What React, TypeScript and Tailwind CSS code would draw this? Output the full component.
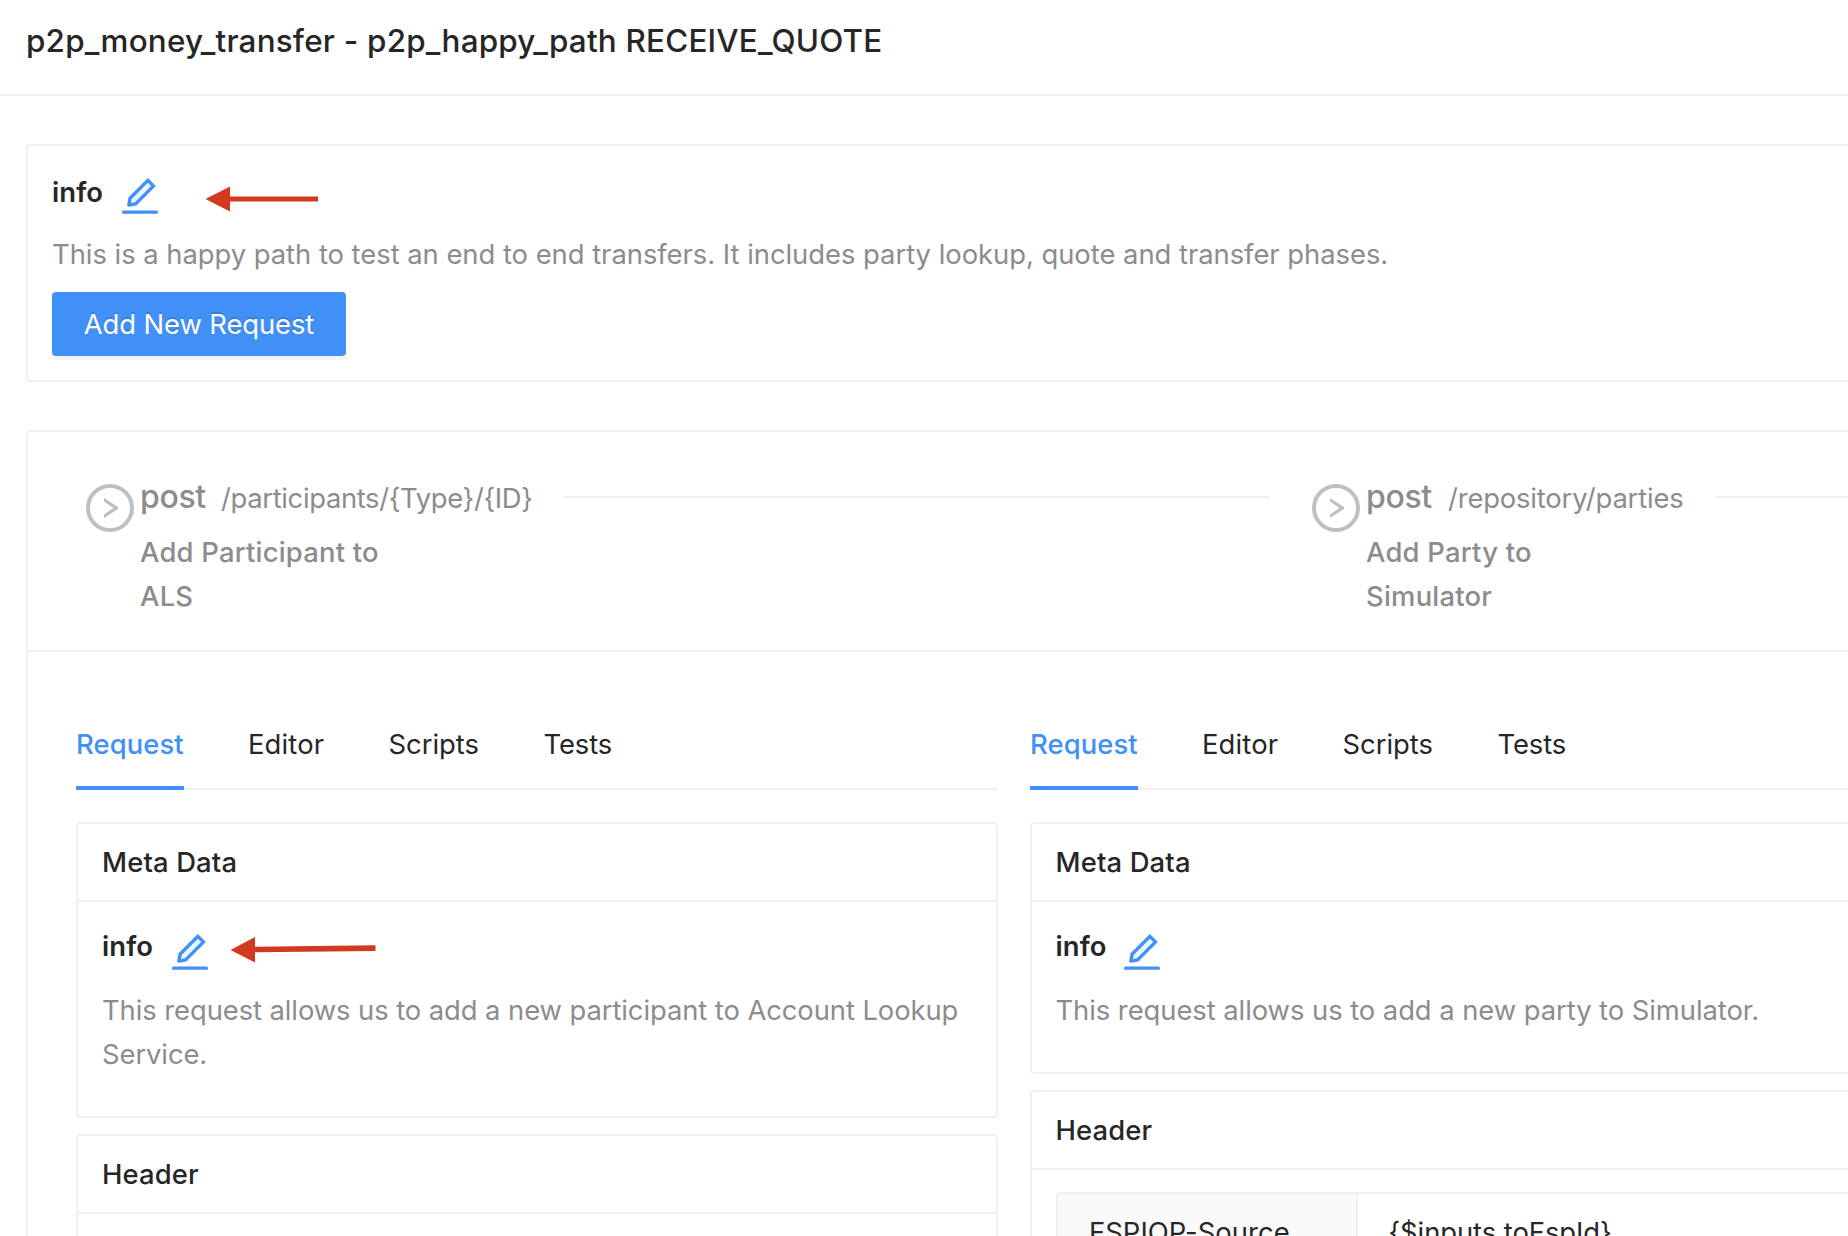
import type { ReactNode } from 'react';

function EditIcon({ className = '' }: { className?: string }) {
  return (
    <svg viewBox="64 64 896 896" className={`h-10 w-10 shrink-0 ${className}`}>
      <path fill="#e6f7ff" d="M761.1 288.3L687.8 215 325.1 577.6l-15.6 89 88.9-15.7z" />
      <path
        fill="#4090f7"
        d="M880 836H144c-17.7 0-32 14.3-32 32v36c0 4.4 3.6 8 8 8h784c4.4 0 8-3.6 8-8v-36c0-17.7-14.3-32-32-32zm-622.3-84c2 0 4-.2 6-.5L431.9 722c2-.4 3.9-1.3 5.3-2.8l423.9-423.9a9.96 9.96 0 0 0 0-14.1L694.9 114.9c-1.9-1.9-4.4-2.9-7.1-2.9s-5.2 1-7.1 2.9L256.8 538.8c-1.5 1.5-2.4 3.3-2.8 5.3l-29.5 168.2a33.5 33.5 0 0 0 9.4 29.8c6.6 6.4 14.9 9.9 23.8 9.9zm67.4-174.4L687.8 215l73.3 73.3-362.7 362.6-88.9 15.7 15.6-89z"
      />
    </svg>
  );
}

function InfoRow({ iconClass, labelClass = 'w-[68px]', children }: { iconClass: string; labelClass?: string; children?: ReactNode }) {
  return (
    <div className="relative flex h-11 items-start">
      <span className={`shrink-0 font-semibold tracking-[0.1px] text-[#262626] ${labelClass}`}>info</span>
      <EditIcon className={iconClass} />
      {children}
    </div>
  );
}

function Step({ path, desc, groupClass, pathClass, descClass }: { path: string; desc: string; groupClass: string; pathClass: string; descClass: string }) {
  return (
    <div className="flex w-[1184px] shrink-0 items-start text-[#8c8c8c]">
      <svg viewBox="0 0 48 48" className="mt-3 h-12 w-12 shrink-0">
        <circle cx="24" cy="24" r="22" strokeWidth="4" fill="none" stroke="#bfbfbf" />
        <path d="M18 14L32 23.1V24.9L18 34V30.4L27.4 24L18 17.6Z" fill="#bfbfbf" />
      </svg>
      <div className={`ml-1.5 shrink-0 ${groupClass}`}>
        <div className="flex h-[49px] items-baseline whitespace-nowrap leading-[49px]">
          <span className="w-[81px] text-[32px] font-medium tracking-[-0.35px]">post</span>
          <span className={pathClass}>{path}</span>
        </div>
        <div className={`mt-[9px] w-[280px] font-medium ${descClass}`}>{desc}</div>
      </div>
      <div className="mt-6 h-0.5 flex-1 bg-[#f0f0f0]" />
    </div>
  );
}

function Tabs() {
  return (
    <div className="flex h-[68px] gap-16 border-b-2 border-[#f0f0f0] text-[#262626]">
      <div className="h-[68px] w-[108px] border-b-4 border-[#4090f7] font-medium tracking-[0.1px] text-[#4090f7]">Request</div>
      <div className="w-[76.5px] tracking-[0.15px]">Editor</div>
      <div className="w-[91px]">Scripts</div>
      <div className="tracking-[-0.1px]">Tests</div>
    </div>
  );
}

function Panel({ title, titleClass = 'pl-6', children }: { title: string; titleClass?: string; children?: ReactNode }) {
  return (
    <section className="rounded-[4px] border-2 border-[#f0f0f0]">
      <h2 className={`flex h-[78px] items-center border-b-2 border-[#f0f0f0] font-medium tracking-[0.15px] text-[#262626] ${titleClass}`}>{title}</h2>
      {children}
    </section>
  );
}

export default function App() {
  return (
    <div className="h-[1236px] w-[1848px] overflow-hidden bg-white font-['Inter',sans-serif] text-[27.4px] leading-[44px]">
      <header className="h-24 border-b-2 border-[#f0f0f0] pl-[26px] pt-4">
        <h1 className="whitespace-nowrap text-[31.4px] font-medium leading-[50px] tracking-[0.21px] text-[#262626]">
          p2p_money_transfer - p2p_happy_path RECEIVE_QUOTE
        </h1>
      </header>

      <main className="flex w-[1990px] flex-col gap-12 pl-[26px] pt-12">
        <section className="rounded-[4px] border-2 border-[#f0f0f0] p-6">
          <InfoRow iconClass="mt-1.5">
            <svg viewBox="0 0 114 28" className="absolute left-[153px] top-[15px] h-7 w-[114px]" fill="#d13a20">
              <path d="M0.5 14L25 1.5V11.5H113V16.5H25V26.5Z" />
            </svg>
          </InfoRow>
          <p className="mt-[18px] tracking-[-0.03px] text-[#8c8c8c]">
            This is a happy path to test an end to end transfers. It includes party lookup, quote and transfer phases.
          </p>
          <button className="mt-4 flex h-16 w-[294px] items-center justify-center rounded-[4px] bg-[#4090f7] tracking-[-0.1px] text-white shadow-[0_4px_0_rgba(0,0,0,0.045)] [text-shadow:0_-2px_0_rgba(0,0,0,0.12)]">
            Add New Request
          </button>
        </section>

        <section className="rounded-[4px] border-2 border-[#f0f0f0]">
          <div className="flex h-[220px] gap-[42px] border-b-2 border-[#f0f0f0] pl-[58px] pt-10">
            <Step path="/participants/{Type}/{ID}" desc="Add Participant to ALS" groupClass="w-[424px]" pathClass="tracking-[-0.34px]" descClass="tracking-[0.22px]" />
            <Step path="/repository/parties" desc="Add Party to Simulator" groupClass="w-[350px]" pathClass="pl-px tracking-[-0.17px]" descClass="tracking-[0.24px]" />
          </div>

          <div className="flex gap-8 pl-12 pt-[70px]">
            <div className="w-[922px] shrink-0">
              <Tabs />
              <div className="mt-8 flex flex-col gap-4">
                <Panel title="Meta Data">
                  <div className="px-6 pb-10 pt-[22px]">
                    <InfoRow iconClass="mt-2">
                      <svg viewBox="0 0 148 28" className="absolute left-[128px] top-[12px] h-7 w-[148px]" fill="#d13a20">
                        <path d="M0.5 14L25 1V10.7L145.5 9.2V14.9L25 16.3V26.5Z" />
                      </svg>
                    </InfoRow>
                    <p className="mt-5 tracking-[-0.08px] text-[#8c8c8c]">
                      This request allows us to add a new participant to Account Lookup Service.
                    </p>
                  </div>
                </Panel>
                <Panel title="Header">
                  <div className="h-40" />
                </Panel>
              </div>
            </div>

            <div className="w-[922px] shrink-0">
              <Tabs />
              <div className="mt-8 flex flex-col gap-4">
                <Panel title="Meta Data" titleClass="pl-[23.5px]">
                  <div className="pb-10 pl-[23.5px] pr-6 pt-[22px]">
                    <InfoRow iconClass="mt-2" labelClass="w-[66.5px]" />
                    <p className="mt-5 tracking-[-0.06px] text-[#8c8c8c]">This request allows us to add a new party to Simulator.</p>
                  </div>
                </Panel>
                <Panel title="Header" titleClass="pl-[23.5px]">
                  <div className="px-6 pb-6 pt-[22px]">
                    <div className="flex rounded-[4px] border-2 border-[#f0f0f0] text-[#262626]">
                      <div className="w-[300px] border-r-2 border-[#f0f0f0] bg-[#fafafa] py-4 pl-[31px] tracking-[0.05px]">FSPIOP-Source</div>
                      <div className="py-4 pl-[30.5px] tracking-[-0.08px]">{'{$inputs.toFspId}'}</div>
                    </div>
                  </div>
                </Panel>
              </div>
            </div>
          </div>
        </section>
      </main>
    </div>
  );
}
